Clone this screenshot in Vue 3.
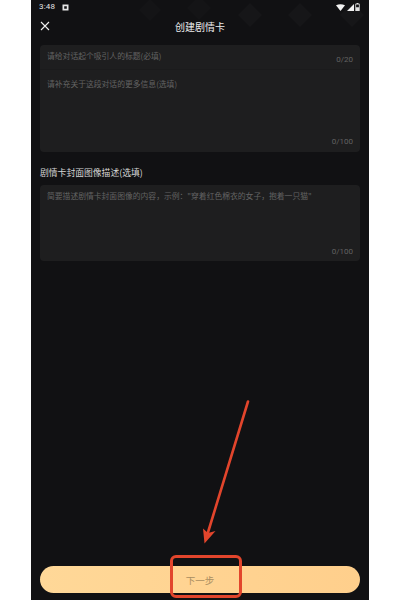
<script setup>
const diamonds = [
  { x: 150, y: 10, r: 11, o: 0.014 },
  { x: 199, y: 8, r: 12, o: 0.016 },
  { x: 250, y: 15, r: 12, o: 0.024 },
  { x: 300, y: 15, r: 12, o: 0.024 },
  { x: 352, y: 15, r: 12, o: 0.024 },
]
const points = (d) =>
  `${d.x},${d.y - d.r} ${d.x + d.r},${d.y} ${d.x},${d.y + d.r} ${d.x - d.r},${d.y}`
</script>

<template>
  <div class="page">
    <div class="phone">
      <div class="status">
        <div class="status-left">
          <span class="time">3:48</span>
          <svg class="notif" viewBox="0 0 7 7"><path fill-rule="evenodd" fill="#e6e6e6" d="M0.5 0.5h6v6h-6zM2.2 2.2v2.6h2.6v-2.6z" /></svg>
        </div>
        <div class="status-right">
          <svg width="9" height="7" viewBox="0 0 9 7"><path d="M0 1.2 Q4.5 -0.8 9 1.2 L4.5 7z" fill="#f2f2f2" /></svg>
          <svg width="7" height="7" viewBox="0 0 7 7"><path d="M7 0v7H0z" fill="#f2f2f2" /></svg>
          <svg width="5" height="8" viewBox="0 0 5 8"><path fill-rule="evenodd" d="M1.5 0h2v0.8h1.2v7.2H0.3V0.8H1.5zM1.1 1.6v2.6h2.8V1.6z" fill="#e0e0e0" /></svg>
        </div>
      </div>
      <header class="nav">
        <svg class="close" viewBox="0 0 10 10"><path d="M1 1l8 8M9 1l-8 8" stroke="#f0f0f0" stroke-width="1.1" fill="none" /></svg>
        <h1 class="title">创建剧情卡</h1>
      </header>

      <main class="form">
        <section class="card">
          <div class="title-row">
            <span class="hint">请给对话起个吸引人的标题(必填)</span>
            <span class="count count-title">0/20</span>
          </div>
          <div class="info-area">
            <span class="hint">请补充关于这段对话的更多信息(选填)</span>
            <span class="count">0/100</span>
          </div>
        </section>

        <label class="label">剧情卡封面图像描述(选填)</label>
        <section class="card cover-area">
          <span class="hint">简要描述剧情卡封面图像的内容，示例："穿着红色棉衣的女子，抱着一只猫"</span>
          <span class="count">0/100</span>
        </section>
      </main>

      <footer class="footer">
        <button class="next" type="button">下一步</button>
      </footer>
    </div>

    <svg class="pattern" width="400" height="40" viewBox="0 0 400 40">
      <polygon v-for="d in diamonds" :key="d.x" :points="points(d)" fill="#fff" :fill-opacity="d.o" />
    </svg>

    <svg class="annotation" width="400" height="600" viewBox="0 0 400 600">
      <path d="M248 401.5L207.5 534" stroke="#e2452c" stroke-width="2.6" stroke-linecap="round" fill="none" />
      <path d="M204.5 543.5L203 528.5L208 533L215.5 531z" fill="#e2452c" />
    </svg>
    <div class="highlight"></div>
  </div>
</template>

<style>
html, body { margin: 0; background: #fff; }
</style>

<style scoped>
.page {
  position: relative;
  width: 400px;
  height: 600px;
  display: flex;
  justify-content: center;
  background: #fff;
  overflow: hidden;
  font-family: "Noto Sans CJK SC", "Noto Sans", Roboto, sans-serif;
}
.phone {
  width: 338px;
  height: 600px;
  background: #111113;
  display: flex;
  flex-direction: column;
}
.status {
  height: 14px;
  padding: 0 9px 0 8px;
  display: flex;
  align-items: center;
  justify-content: space-between;
}
.status-left, .status-right { display: flex; align-items: center; }
.status-left { gap: 7px; }
.status-right { gap: 1.5px; }
.time {
  font-family: Roboto, sans-serif;
  font-size: 8px;
  line-height: 14px;
  color: #e4e4e4;
  letter-spacing: 0.2px;
}
.notif { width: 7px; height: 7px; }
.nav {
  height: 24px;
  position: relative;
  display: flex;
  align-items: center;
  justify-content: center;
  padding-top: 1px;
}
.close {
  position: absolute;
  left: 9px;
  top: 7px;
  width: 10px;
  height: 10px;
}
.title {
  margin: 0;
  font-size: 10px;
  line-height: 14px;
  font-weight: 400;
  color: #ececec;
}
.form {
  flex: 1;
  padding: 6px 9px 0;
  display: flex;
  flex-direction: column;
}
.card {
  background: #1e1e1f;
  border-radius: 4px;
  display: flex;
  flex-direction: column;
}
.title-row {
  height: 25px;
  padding: 5px 7px 0;
  box-sizing: border-box;
  border-bottom: 1px solid #1b1b1c;
  display: flex;
  justify-content: space-between;
}
.info-area {
  height: 82px;
  box-sizing: border-box;
  padding: 8px 7px 4px;
  display: flex;
  flex-direction: column;
  justify-content: space-between;
}
.hint {
  font-size: 7.8px;
  line-height: 12px;
  color: #636363;
  white-space: nowrap;
}
.count {
  align-self: flex-end;
  font-family: Roboto, sans-serif;
  font-size: 8px;
  line-height: 12px;
  color: #626262;
}
.count-title { align-self: flex-start; padding-top: 4px; line-height: 11px; }
.label {
  margin-top: 14px;
  font-size: 8.8px;
  line-height: 13px;
  color: #d6d6d6;
}
.cover-area {
  margin-top: 6px;
  height: 76px;
  box-sizing: border-box;
  padding: 5px 7px 3px;
  justify-content: space-between;
}
.footer {
  padding: 0 9px 7px;
}
.next {
  width: 100%;
  height: 27px;
  display: block;
  border: 0;
  padding: 0;
  border-radius: 13.5px;
  background: linear-gradient(90deg, #ffd898, #ffcf8c);
  color: #a98d60;
  font-family: inherit;
  font-size: 9.5px;
}
.pattern {
  position: absolute;
  left: 0;
  top: 0;
  pointer-events: none;
  clip-path: inset(0 31px);
}
.annotation {
  position: absolute;
  left: 0;
  top: 0;
  pointer-events: none;
}
.highlight {
  position: absolute;
  left: 170px;
  top: 555px;
  width: 72px;
  height: 43px;
  box-sizing: border-box;
  border: 3px solid #e2452c;
  border-radius: 6px;
}
</style>
